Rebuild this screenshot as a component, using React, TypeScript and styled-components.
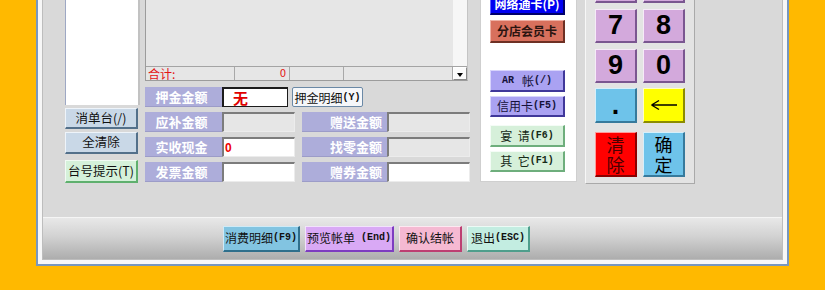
import React from "react";
import styled, { createGlobalStyle } from "styled-components";

const ORANGE = "#ffb900";
const CJK = `"Noto Sans CJK SC", "Liberation Sans", sans-serif`;

const GlobalStyle = createGlobalStyle`
  html, body { margin: 0; padding: 0; background: ${ORANGE}; }
  body { font-family: ${CJK}; }
  * { box-sizing: border-box; }
`;

type Tone = { bg: string; light: string; dark: string; color: string };

const TONES: Record<string, Tone> = {
  side: { bg: "#c9d8e7", light: "#eef4fa", dark: "#53708a", color: "#111" },
  sideGreen: { bg: "#d5f1da", light: "#f2fbf4", dark: "#5fb06e", color: "#111" },
  net: { bg: "#0000f2", light: "#6060ff", dark: "#00006a", color: "#fff" },
  branch: { bg: "#d8705d", light: "#eeb0a4", dark: "#6e3024", color: "#2a1410" },
  violet: { bg: "#aaa2f2", light: "#d8d4fc", dark: "#40389a", color: "#16123a" },
  mint: { bg: "#d6f0da", light: "#f4fcf6", dark: "#6eae7c", color: "#162a18" },
  digit: { bg: "#d3a9dc", light: "#f6eaf8", dark: "#7a5690", color: "#000" },
  sky: { bg: "#6ec3ea", light: "#d6effa", dark: "#377a9c", color: "#000" },
  yellow: { bg: "#ffff00", light: "#ffffc4", dark: "#8c8c00", color: "#000" },
  red: { bg: "#ff0000", light: "#ff9a9a", dark: "#8a0000", color: "#4a0000" },
  tbBlue: { bg: "#82c4e1", light: "#cfeaf6", dark: "#2f6f8c", color: "#111" },
  tbPurple: { bg: "#d9a9f5", light: "#f2e2fc", dark: "#7d3cc0", color: "#111" },
  tbPink: { bg: "#f5b9d2", light: "#fde8f1", dark: "#bd3f72", color: "#111" },
  tbMint: { bg: "#c3ede1", light: "#ecfaf5", dark: "#4f9e8c", color: "#111" },
};

const Page = styled.div`
  width: 825px;
  height: 290px;
  overflow: hidden;
  background: ${ORANGE};
`;

const Window = styled.div`
  margin: -50px 0 0 36px;
  width: 753px;
  height: 316px;
  border: 2px solid #7897bd;
  background: #f7f7f7;
  padding: 4px;
  display: flex;
`;

const Content = styled.div`
  flex: 1;
  display: flex;
  flex-direction: column;
  background: #d9d9d9;
  border: 1px solid #bdbdbd;
`;

const Main = styled.div`
  flex: 1;
  display: flex;
  align-items: flex-start;
  padding-left: 22px;
`;

/* ---------- left column ---------- */

const LeftColumn = styled.div`
  width: 75px;
  display: flex;
  flex-direction: column;
`;

const ListBox = styled.div`
  height: 148px;
  background: #fff;
  border-left: 1px solid #9ea8c4;
  border-right: 2px solid #c2c2c2;
`;

const Raised = styled.div<{ $tone: Tone; $w: number; $h: number; $mt?: number }>`
  width: ${(p) => p.$w}px;
  height: ${(p) => p.$h}px;
  margin-top: ${(p) => p.$mt ?? 0}px;
  display: flex;
  align-items: center;
  justify-content: center;
  background: ${(p) => p.$tone.bg};
  color: ${(p) => p.$tone.color};
  border-style: solid;
  border-width: 1px 2px 2px 1px;
  border-color: ${(p) => `${p.$tone.light} ${p.$tone.dark} ${p.$tone.dark} ${p.$tone.light}`};
  white-space: pre;
  line-height: 1;
  small {
    font-size: 10px;
    font-family: "Liberation Mono", "DejaVu Sans Mono", monospace;
    font-weight: 700;
    letter-spacing: 0;
  }
`;

const SideButton = styled(Raised)`
  font-size: 12.5px;
`;

/* ---------- center column ---------- */

const CenterColumn = styled.div`
  width: 325px;
  margin-left: 5px;
  display: flex;
  flex-direction: column;
`;

const Grid = styled.div`
  width: 323px;
  height: 124px;
  display: flex;
  flex-direction: column;
  border: 1px solid #9c9c9c;
  border-right-color: #c4c4c4;
  background: #e6e6e6;
`;

const GridBody = styled.div`
  flex: 1;
  display: flex;
`;

const GridArea = styled.div`
  flex: 1;
`;

const ScrollTrack = styled.div`
  width: 14px;
  background: #f6f6f6;
`;

const TotalRow = styled.div`
  height: 14px;
  display: flex;
  border-top: 1px solid #a4a4a4;
`;

const TotalCell = styled.div<{ $w: number; $right?: boolean }>`
  width: ${(p) => p.$w}px;
  border-right: 1px solid #a8a8a8;
  color: #e41414;
  font-size: ${(p) => (p.$right ? 10 : 12)}px;
  line-height: 13px;
  display: flex;
  justify-content: ${(p) => (p.$right ? "flex-end" : "flex-start")};
  padding: 0 ${(p) => (p.$right ? 3 : 2)}px;
  font-family: ${(p) => (p.$right ? `"DejaVu Sans", sans-serif` : CJK)};
`;

const DropButton = styled.div`
  width: 14px;
  background: #fbfbfb;
  border: 1px solid;
  border-color: #ffffff #8a8a8a #8a8a8a #ffffff;
  display: flex;
  align-items: center;
  justify-content: center;
  &::after {
    content: "";
    border-left: 3px solid transparent;
    border-right: 3px solid transparent;
    border-top: 4px solid #000;
    margin-top: 2px;
  }
`;

const FormRows = styled.div`
  margin-top: 6px;
  display: flex;
  flex-direction: column;
  gap: 5px;
`;

const FormRow = styled.div`
  display: flex;
  height: 20px;
`;

const FieldLabel = styled.div<{ $w: number; $right?: boolean; $ml?: number }>`
  width: ${(p) => p.$w}px;
  margin-left: ${(p) => p.$ml ?? 0}px;
  background: #adadda;
  color: #fff;
  font-size: 13px;
  font-weight: 700;
  display: flex;
  align-items: center;
  justify-content: ${(p) => (p.$right ? "flex-end" : "center")};
  padding-right: ${(p) => (p.$right ? 5 : 4)}px;
  border-bottom: 1px solid #9c9cc8;
`;

const Field = styled.div<{ $w: number; $blank?: boolean }>`
  width: ${(p) => p.$w}px;
  background: ${(p) => (p.$blank ? "#fff" : "#e6e6e6")};
  border-style: solid;
  border-width: 2px 1px 1px 2px;
  border-color: #7c7c7c #ececec #ececec #7c7c7c;
  display: flex;
  align-items: center;
  padding-left: 1px;
  color: #ee0000;
  font-family: "Liberation Sans", sans-serif;
  font-weight: 700;
  font-size: 12px;
`;

const FocusField = styled.div`
  width: 66px;
  background: #fff;
  border-style: solid;
  border-width: 2px 1px 1px 2px;
  border-color: #1c1c1c;
  display: flex;
  align-items: center;
  padding-left: 9px;
  color: #e00000;
  font-size: 15px;
  font-weight: 700;
`;

const DetailButton = styled.div`
  margin-left: 4px;
  width: 71px;
  background: #f5f7fa;
  border: 1px solid #6b89a6;
  border-radius: 2px;
  font-size: 12px;
  color: #111;
  display: flex;
  align-items: center;
  justify-content: center;
  white-space: pre;
  small {
    font-size: 10px;
    font-family: "Liberation Mono", monospace;
    font-weight: 700;
  }
`;

/* ---------- payment panel ---------- */

const PayPanel = styled.div`
  width: 97px;
  height: 225px;
  margin-left: 10px;
  background: #fff;
  border: 1px solid #cfcfcf;
  padding: 35px 0 0 9px;
  display: flex;
  flex-direction: column;
`;

const PayButton = styled(Raised)<{ $bold?: boolean }>`
  font-size: 12px;
  font-weight: ${(p) => (p.$bold ? 700 : 400)};
`;

/* ---------- keypad ---------- */

const KeyPanel = styled.div`
  width: 110px;
  height: 227px;
  margin-left: 8px;
  background: #e3e3e3;
  border: 1px solid;
  border-color: #f7f7f7 #a9a9a9 #a9a9a9 #f7f7f7;
  padding: 0 9px;
  display: flex;
  flex-direction: column;
`;

const KeyRow = styled.div<{ $mt: number; $h: number }>`
  margin-top: ${(p) => p.$mt}px;
  height: ${(p) => p.$h}px;
  display: flex;
  gap: 6px;
`;

const Key = styled(Raised)<{ $text?: boolean }>`
  height: 100%;
  font-family: ${(p) => (p.$text ? CJK : `"Liberation Sans", Arial, sans-serif`)};
  font-size: ${(p) => (p.$text ? 18 : 27)}px;
  font-weight: ${(p) => (p.$text ? 400 : 700)};
  line-height: ${(p) => (p.$text ? "20px" : 1)};
  text-align: center;
`;

/* ---------- bottom toolbar ---------- */

const Toolbar = styled.div`
  height: 42px;
  border-top: 1px solid #f5f5f5;
  background: linear-gradient(#e8e8e8, #d2d2d2 45%, #adadad);
  display: flex;
  align-items: center;
  padding-left: 180px;
  gap: 5px;
`;

const ToolButton = styled(Raised)`
  font-size: 12px;
`;

const ArrowIcon = () => (
  <svg width="28" height="12" viewBox="0 0 28 12">
    <path d="M1.5 6 H27 M1.5 6 L9 1.5 M1.5 6 L9 10.5" stroke="#000" strokeWidth="1.4" fill="none" />
  </svg>
);

export default function App() {
  return (
    <Page>
      <GlobalStyle />
      <Window>
        <Content>
          <Main>
            <LeftColumn>
              <ListBox />
              <SideButton $tone={TONES.side} $w={73} $h={21} $mt={3}>
                消单台(/)
              </SideButton>
              <SideButton $tone={TONES.side} $w={73} $h={22} $mt={3}>
                全清除
              </SideButton>
              <SideButton $tone={TONES.sideGreen} $w={73} $h={23} $mt={6}>
                台号提示(T)
              </SideButton>
            </LeftColumn>

            <CenterColumn>
              <Grid>
                <GridBody>
                  <GridArea />
                  <ScrollTrack />
                </GridBody>
                <TotalRow>
                  <TotalCell $w={89}>合计:</TotalCell>
                  <TotalCell $w={55} $right>
                    0
                  </TotalCell>
                  <TotalCell $w={54} />
                  <TotalCell $w={109} />
                  <DropButton />
                </TotalRow>
              </Grid>

              <FormRows>
                <FormRow>
                  <FieldLabel $w={77}>押金金额</FieldLabel>
                  <FocusField>无</FocusField>
                  <DetailButton>
                    押金明细<small>(Y)</small>
                  </DetailButton>
                </FormRow>
                <FormRow>
                  <FieldLabel $w={77}>应补金额</FieldLabel>
                  <Field $w={73} />
                  <FieldLabel $w={85} $right $ml={7}>
                    赠送金额
                  </FieldLabel>
                  <Field $w={83} />
                </FormRow>
                <FormRow>
                  <FieldLabel $w={77}>实收现金</FieldLabel>
                  <Field $w={73} $blank>
                    0
                  </Field>
                  <FieldLabel $w={85} $right $ml={7}>
                    找零金额
                  </FieldLabel>
                  <Field $w={83} />
                </FormRow>
                <FormRow>
                  <FieldLabel $w={77}>发票金额</FieldLabel>
                  <Field $w={73} $blank />
                  <FieldLabel $w={85} $right $ml={7}>
                    赠券金额
                  </FieldLabel>
                  <Field $w={83} $blank />
                </FormRow>
              </FormRows>
            </CenterColumn>

            <PayPanel>
              <PayButton $tone={TONES.net} $w={75} $h={22} $bold>
                网络通卡(P)
              </PayButton>
              <PayButton $tone={TONES.branch} $w={75} $h={23} $mt={5} $bold>
                分店会员卡
              </PayButton>
              <PayButton $tone={TONES.violet} $w={75} $h={22} $mt={27}>
                <small>AR</small>
                {"   帐"}
                <small>(/)</small>
              </PayButton>
              <PayButton $tone={TONES.violet} $w={75} $h={21} $mt={4}>
                信用卡<small>(F5)</small>
              </PayButton>
              <PayButton $tone={TONES.mint} $w={75} $h={22} $mt={8}>
                {"宴  请"}
                <small>(F6)</small>
              </PayButton>
              <PayButton $tone={TONES.mint} $w={75} $h={21} $mt={4}>
                {"其  它"}
                <small>(F1)</small>
              </PayButton>
            </PayPanel>

            <KeyPanel>
              <KeyRow $mt={11} $h={34}>
                <Key $tone={TONES.digit} $w={42} $h={34} />
                <Key $tone={TONES.digit} $w={42} $h={34} />
              </KeyRow>
              <KeyRow $mt={6} $h={34}>
                <Key $tone={TONES.digit} $w={42} $h={34}>7</Key>
                <Key $tone={TONES.digit} $w={42} $h={34}>8</Key>
              </KeyRow>
              <KeyRow $mt={6} $h={34}>
                <Key $tone={TONES.digit} $w={42} $h={34}>9</Key>
                <Key $tone={TONES.digit} $w={42} $h={34}>0</Key>
              </KeyRow>
              <KeyRow $mt={5} $h={35}>
                <Key $tone={TONES.sky} $w={42} $h={35}>.</Key>
                <Key $tone={TONES.yellow} $w={42} $h={35}>
                  <ArrowIcon />
                </Key>
              </KeyRow>
              <KeyRow $mt={9} $h={45}>
                <Key $tone={TONES.red} $w={42} $h={45} $text>
                  {"清\n除"}
                </Key>
                <Key $tone={TONES.sky} $w={42} $h={45} $text>
                  {"确\n定"}
                </Key>
              </KeyRow>
            </KeyPanel>
          </Main>

          <Toolbar>
            <ToolButton $tone={TONES.tbBlue} $w={77} $h={26}>
              消费明细<small>(F9)</small>
            </ToolButton>
            <ToolButton $tone={TONES.tbPurple} $w={89} $h={26}>
              预览帐单<small> (End)</small>
            </ToolButton>
            <ToolButton $tone={TONES.tbPink} $w={63} $h={26}>
              确认结帐
            </ToolButton>
            <ToolButton $tone={TONES.tbMint} $w={63} $h={26}>
              退出<small>(ESC)</small>
            </ToolButton>
          </Toolbar>
        </Content>
      </Window>
    </Page>
  );
}
